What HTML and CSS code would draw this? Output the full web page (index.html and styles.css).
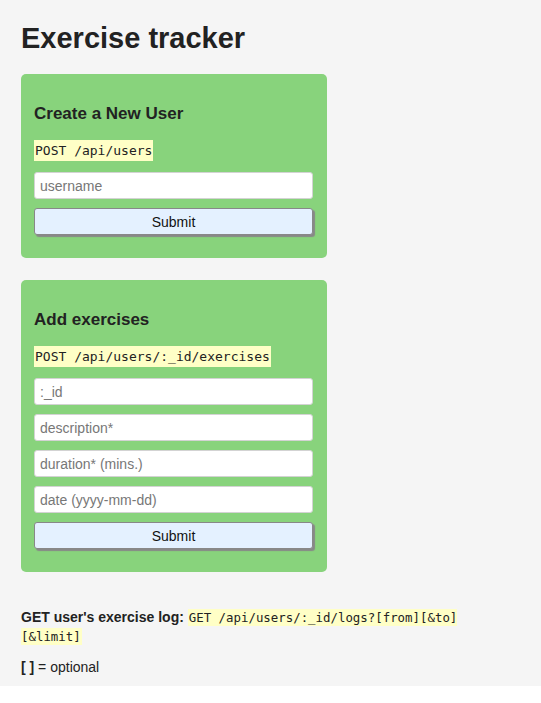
FILE: index.html
```html
<!DOCTYPE html>
<html>
<head>
<meta charset="utf-8">
<title>Exercise Tracker</title>
<link rel="stylesheet" href="styles.css">
</head>
<body>
<div class="container">
  <h1>Exercise tracker</h1>
  <form class="card">
    <h3>Create a New User</h3>
    <p class="endpoint"><code>POST /api/users</code></p>
    <input class="field" type="text" placeholder="username">
    <input class="btn" type="button" value="Submit">
  </form>
  <form class="card">
    <h3>Add exercises</h3>
    <p class="endpoint"><code>POST /api/users/:_id/exercises</code></p>
    <input class="field" type="text" placeholder=":_id">
    <input class="field" type="text" placeholder="description*">
    <input class="field" type="text" placeholder="duration* (mins.)">
    <input class="field" type="text" placeholder="date (yyyy-mm-dd)">
    <input class="btn" type="button" value="Submit">
  </form>
  <p class="log"><strong>GET user's exercise log:</strong> <code>GET /api/users/:_id/logs?[from][&amp;to][&amp;limit]</code></p>
  <p class="note"><strong>[ ]</strong> = optional</p>
</div>
</body>
</html>
```
FILE: styles.css
```css
html {
  background: #ffffff;
}
body {
  margin: 0;
  background: #f5f5f5;
  color: #222222;
  font-family: "Liberation Sans", Arial, sans-serif;
  font-size: 14px;
}
.container {
  padding: 1px 21px 1px 21px;
}
h1 {
  font-size: 29px;
  margin: 20px 0 19px 0;
  line-height: 34px;
}
.card {
  width: 280px;
  padding: 17px 13px 23px 13px;
  background: #88d37c;
  border-radius: 5px;
  margin: 0 0 22px 0;
  display: flex;
  flex-direction: column;
  gap: 9px;
}
.card h3 {
  font-size: 17px;
  margin: 13px 0 7px 0;
  line-height: 20px;
}
.endpoint {
  margin: 0 0 2px 0;
  line-height: 20px;
}
code {
  font-family: "DejaVu Sans Mono", "Liberation Mono", monospace;
  background: #ffffc6;
  color: #222;
}
.endpoint code {
  font-size: 13px;
  padding: 3px 1px;
}
.field {
  box-sizing: border-box;
  height: 27px;
  width: 279px;
  margin: 0;
  border: 1px solid #d3d3d3;
  border-radius: 3px;
  padding: 0 5px;
  font-family: "Liberation Sans", Arial, sans-serif;
  font-size: 14px;
  background: #fff;
}
.field::placeholder {
  color: #777;
}
.btn {
  box-sizing: border-box;
  height: 27px;
  width: 279px;
  margin: 0;
  border: 1px solid #888;
  border-radius: 3px;
  background: #e4f1ff;
  box-shadow: 2px 2px 1px #888;
  font-family: "Liberation Sans", Arial, sans-serif;
  font-size: 14px;
  color: #111;
}
.log {
  margin: 36px 0 0 0;
  line-height: 18px;
  width: 460px;
}
.log code {
  font-size: 12.4px;
  padding: 1px 1px;
}
.note {
  margin: 12px 0 9px 0;
  line-height: 18px;
}
```
